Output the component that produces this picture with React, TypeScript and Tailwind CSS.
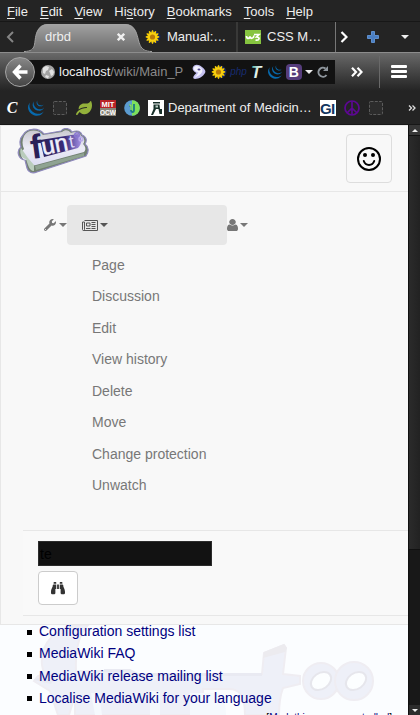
import React from "react";
import { FaBinoculars, FaLeaf, FaWrench } from "react-icons/fa";
import { SiJquery } from "react-icons/si";

const menus = [
  ["", "F", "ile"],
  ["", "E", "dit"],
  ["", "V", "iew"],
  ["Hi", "s", "tory"],
  ["", "B", "ookmarks"],
  ["", "T", "ools"],
  ["", "H", "elp"],
];

const pageActions = ["Page", "Discussion", "Edit", "View history", "Delete", "Move", "Change protection", "Unwatch"];

const wikiLinks = [
  "Configuration settings list",
  "MediaWiki FAQ",
  "MediaWiki release mailing list",
  "Localise MediaWiki for your language",
];

function Caret({ className }: { className: string }) {
  return (
    <svg viewBox="0 0 8 4" className={className} fill="currentColor" aria-hidden="true">
      <path d="M0 0h8L4 4z" />
    </svg>
  );
}

function Sunflower() {
  return (
    <svg viewBox="0 0 16 16" className="h-4 w-4 shrink-0" aria-hidden="true">
      <circle cx="9" cy="8" r="6.500" fill="#14235c" />
      {[0, 30, 60, 90, 120, 150].map((a) => (
        <ellipse key={a} cx="7.500" cy="8" rx="7" ry="1.600" fill="#f5cc00" transform={`rotate(${a} 7.500 8)`} />
      ))}
      <circle cx="7.500" cy="8" r="4.600" fill="#f7cf12" />
      <circle cx="7.500" cy="8" r="2.600" fill="#b87a08" />
    </svg>
  );
}

function W3Icon() {
  return (
    <svg viewBox="0 0 16 14" className="h-3.5 w-4 shrink-0" aria-hidden="true">
      <rect width="16" height="14" fill="#86c440" />
      <path d="M1.500 6c0 3 3 3 3.500 .5C5.500 9 8.500 9 9 5.500M9 4.500h5L11.500 7c4 0 3 4-1 3" fill="none" stroke="#fff" strokeWidth="1.700" />
    </svg>
  );
}

function Dashed() {
  return (
    <svg viewBox="0 0 16 16" className="h-4 w-4 shrink-0" aria-hidden="true">
      <rect x="1.500" y="1.500" width="13" height="13" rx="1" fill="#2c2c2c" stroke="#5c5c5c" strokeDasharray="3 1.300" />
    </svg>
  );
}

function Globe() {
  return (
    <svg viewBox="0 0 14 14" className="h-3.5 w-3.5 shrink-0" aria-hidden="true">
      <circle cx="7" cy="7" r="7" fill="#a3a3a3" />
      <path d="M2 3l3-2 3 1-1 3-2 1-1 3-2-1zM8 6l3-2 2 3-1 3-2 1-1-3zM5 10l3 1-1 2.500-3-1.500z" fill="#e2e2e2" />
    </svg>
  );
}

function Gentoo() {
  return (
    <svg viewBox="0 0 16 16" className="h-4 w-4 shrink-0" aria-hidden="true">
      <path d="M2 3C4-.5 8 .5 11 3c3 2.500 4 4 3 6-1.500 3-6 6-10 6-3-.5-2-3 1.500-6C2 7 1 5 2 3z" fill="#c6c2f2" />
      <path d="M3 3.500C5 1 8 2 10 4c1.500 1.500 2 3 .5 5C9 11 5 13.500 3.500 13.500c2-2 3-3 4-5C5 7.500 2 6 3 3.500z" fill="#f3f2ff" />
      <ellipse cx="8" cy="5.500" rx="1.500" ry="1" fill="#50488c" />
    </svg>
  );
}

function NewsIcon() {
  return (
    <svg viewBox="0 0 16 11" className="h-[11px] w-4" fill="none" stroke="currentColor" aria-hidden="true">
      <path d="M2.500 .5h13v10h-14q-1 0-1-1V2h2v7.500q0 1-1 1" />
      <path d="M4.500 3h3.500v3H4.500zM9.500 2.500h4M9.500 4.500h4M9.500 6.500h4M4 8.500h4.500M9.500 8.500h4" />
    </svg>
  );
}

function UserIcon() {
  return (
    <svg viewBox="0 128 1280 1536" className="h-3 w-[11px]" fill="currentColor" preserveAspectRatio="none" aria-hidden="true">
      <path d="M1280 1399q0 109-62.500 187t-150.500 78h-854q-88 0-150.500-78t-62.500-187q0-85 8.500-160.500t31.500-152 58.500-131 94-89 134.500-34.500q131 128 313 128t313-128q76 0 134.500 34.500t94 89 58.500 131 31.500 152 8.500 160.500zm-256-887q0 159-112.500 271.500t-271.500 112.500-271.500-112.500-112.500-271.500 112.500-271.500 271.500-112.500 271.500 112.500 112.500 271.500z" />
    </svg>
  );
}

function Logo() {
  return (
    <svg viewBox="0 0 72 46" className="h-[46px] w-[72px]" role="img" aria-label="Funtoo">
      <defs>
        <linearGradient id="logoFace" x1="0" y1="0" x2="1" y2="0">
          <stop offset="0" stopColor="#2a2058" />
          <stop offset=".6" stopColor="#3a2c7a" />
          <stop offset="1" stopColor="#a592e6" />
        </linearGradient>
        <linearGradient id="logoRim" x1="0" y1="0" x2="0" y2="1">
          <stop offset="0" stopColor="#c9c9d0" />
          <stop offset=".5" stopColor="#ececf6" />
          <stop offset="1" stopColor="#dcdcf2" />
        </linearGradient>
      </defs>
      <path d="M6 7C10 0 21-1 27 6l17-3c3-4 9-3 11 1 5-2 9-1 10 3 5 2 5 6 3 9 4 3 4 8 1 12L20 44c-5 2-9 0-10-4l-2-8c-7-1-9-9-4-13C2 14 3 10 6 7z" fill="#728172" stroke="#8f89bd" strokeWidth="1.200" />
      <path d="M7 8C11 1 21 1 26 7l19-3c3-3 7-2 9 1 5-2 9-1 10 3 4 2 4 6 2 8 3 3 3 6 1 8L19 37c-4 1-6-1-8-5-7 1-9-7-4-11-2-4-2-9 0-13z" fill="url(#logoRim)" />
      <path d="M4 20l7 10 6 7v6q-4 0-6-6l-2-6c-5-1-7-7-5-11z" fill="#b9ccbc" />
      <path d="M18 38l49-13v3L19 42z" fill="#8fa392" />
      <path d="M23 12l38-6c5 3 4 10 0 14l-34 9z" fill="url(#logoFace)" />
      <text x="15" y="31" transform="rotate(-8 15 31)" fontFamily="Liberation Sans" fontSize="34" fontWeight="700" fill="#2a2058">f</text>
      <text x="26" y="27" transform="rotate(-11 26 27)" fontFamily="Liberation Sans" fontSize="24" fill="#f0f0fb" stroke="#f0f0fb" strokeWidth=".5">un</text>
      <text x="53" y="20" transform="rotate(-10 53 20)" fontFamily="Liberation Sans" fontSize="18" fill="#dedaf8">t</text>
      <circle cx="60" cy="7" r="2.300" fill="none" stroke="#8b78d2" strokeWidth="1.500" />
      <circle cx="64" cy="11" r="2" fill="none" stroke="#b9abea" strokeWidth="1.300" />
    </svg>
  );
}

/* Pale bevelled emblem behind the article */
function Watermark() {
  return (
    <svg viewBox="0 0 407 90" className="absolute left-0 top-0 h-[90px] w-[407px]" aria-hidden="true">
      <g fill="#eef0f8" stroke="#efedf2" strokeWidth="2">
        <path d="M42 40C40 18 56 2 80 0h8c-8 8-13 24-12 46h48l10 3h128l2-21 20-8 2 3-3 26 17 2v8l-17 4c-3 8-4 16-4 27h-34c0-20-6-26-16-26h-26v26H75V70l-6 20H58l-8-24-16-10 4-5 6-2z" />
        <circle cx="321" cy="56" r="18" />
        <circle cx="354" cy="56" r="19" />
      </g>
      <path d="M34 55l12-6 10 2-5 8zM104 47h24l10 4h124v-3H138l-8-4h-26z" fill="#e9eaf2" />
      <path d="M95 90l-4-22h8l3 22zM150 90V66h10v24zM190 90V68h28c6 4 8 12 8 22z" fill="#f5f9fd" />
      <ellipse cx="321" cy="56" rx="11" ry="8" transform="rotate(-35 321 56)" fill="#fcfeff" stroke="#e6e6ec" strokeWidth="2" />
      <ellipse cx="356" cy="56" rx="11" ry="8" transform="rotate(-35 356 56)" fill="#fcfeff" stroke="#e6e6ec" strokeWidth="2" />
      <path d="M263 33l1-6 20-8 3 4-2 4z" fill="#ecebef" />
    </svg>
  );
}

export default function App() {
  return (
    <div className="flex h-screen flex-col overflow-hidden bg-[#242424] font-['Liberation_Sans',Arial,sans-serif] text-[13px] text-[#eeeeee]">
      <div className="flex h-[22px] shrink-0 items-center gap-3 border-b border-[#171717] px-[7px] pt-0.5" role="menubar">
        {menus.map(([a, b, c]) => (
          <button key={b + c} role="menuitem" className="leading-5">
            {a}
            <span className="underline underline-offset-2">{b}</span>
            {c}
          </button>
        ))}
      </div>

      <div className="flex h-[30px] shrink-0 items-center">
        <button className="w-9 shrink-0 pl-1.5" aria-label="Scroll tabs left">
          <svg viewBox="0 0 8 12" className="h-3 w-2" fill="none" stroke="#858585" strokeWidth="2">
            <path d="M7 1L2 6l5 5" />
          </svg>
        </button>
        <div className="relative flex h-full w-[104px] shrink-0 items-center">
          <svg viewBox="0 0 128 28" className="absolute -left-3 bottom-0 h-7 w-32" preserveAspectRatio="none" aria-hidden="true">
            <defs>
              <linearGradient id="tabFill" x1="0" y1="0" x2="0" y2="1">
                <stop offset="0" stopColor="#a2a2a2" />
                <stop offset="1" stopColor="#6a6a6a" />
              </linearGradient>
            </defs>
            <path d="M0 28C14 28 9 18 13 8Q16 0 24 0h77q8 0 11 8c4 10 2 20 16 20z" fill="url(#tabFill)" />
            <path d="M0 27.500C14 27.500 9 18 13 8Q16 .5 24 .5h77q8 0 11 7.500c4 10 2 19.500 16 19.500" fill="none" stroke="#a2a2a2" />
          </svg>
          <button className="relative flex-1 pl-[9px] text-left" role="tab" aria-selected="true">drbd</button>
          <button className="relative mr-[15px]" aria-label="Close tab">
            <svg viewBox="0 0 8 8" className="h-2 w-2" stroke="#f0f0f0" strokeWidth="2.400">
              <path d="M.8 .8l6.400 6.400M7.200 .8L.8 7.200" />
            </svg>
          </button>
        </div>
        <button className="flex h-full w-24 shrink-0 items-center gap-1.5 pl-[5px]" role="tab">
          <Sunflower />
          Manual:…
        </button>
        <button className="flex h-full min-w-0 flex-1 items-center gap-1.5 border-l-2 border-[#393938] pl-[7px]" role="tab">
          <W3Icon />
          CSS M…
        </button>
        <button className="h-full w-6 shrink-0 border-l border-[#777777] pl-1" aria-label="Scroll tabs right">
          <svg viewBox="0 0 8 12" className="h-3 w-2" fill="none" stroke="#fff" strokeWidth="2.200">
            <path d="M1.500 1l5 5-5 5" />
          </svg>
        </button>
        <button className="w-8 shrink-0 pl-2" aria-label="New tab">
          <svg viewBox="0 0 12 12" className="h-3 w-3">
            <path d="M4.500 .5h3v4h4v3h-4v4h-3v-4h-4v-3h4z" fill="#4a7fc4" stroke="#5f8fcc" />
          </svg>
        </button>
        <button className="flex w-[29px] shrink-0 justify-center pr-0.5" aria-label="List all tabs">
          <Caret className="h-1 w-2" />
        </button>
      </div>

      <div className="flex h-[39px] shrink-0 items-center border-t border-[#8c8c8c] bg-linear-to-b from-[#696969] to-[#242424] pl-[5px]">
        <button className="z-10 flex h-[30px] w-[30px] shrink-0 items-center justify-center rounded-full border border-[#a6a6a6] bg-linear-to-b from-[#888888] to-[#454545]" aria-label="Back">
          <svg viewBox="0 0 16 16" className="h-4 w-4" fill="none" stroke="#fff" strokeWidth="3.400">
            <path d="M8.500 1.500L2.500 8l6 6.500M3 8h12.500" />
          </svg>
        </button>
        <div className="-ml-2 flex h-6 min-w-0 flex-1 items-center bg-[#121212] pl-3.5">
          <Globe />
          <div className="ml-1 w-[126px] shrink-0 overflow-hidden whitespace-nowrap text-[#8a8a8a]">
            <span className="text-[#eeeeee]">localhost</span>/wiki/Main_P
          </div>
          <div className="flex flex-1 items-center justify-between pl-1.5 pr-1.5">
            <Gentoo />
            <Sunflower />
            <span className="text-[10px] italic leading-4 text-[#172c70]">php</span>
            <svg viewBox="0 0 14 16" className="h-4 w-3.5 shrink-0" role="img" aria-label="T">
              <defs>
                <linearGradient id="tBadge" x1="0" y1="0" x2="1" y2="1">
                  <stop offset="0" stopColor="#2ba38f" />
                  <stop offset=".5" stopColor="#eef7f0" />
                  <stop offset="1" stopColor="#3f9b80" />
                </linearGradient>
              </defs>
              <text x="0" y="14" fontFamily="Liberation Sans" fontSize="17" fontStyle="italic" fontWeight="700" fill="url(#tBadge)">T</text>
            </svg>
            <SiJquery className="h-3.5 w-3.5 text-[#0769ad]" />
            <span className="flex h-4 w-4 items-center justify-center rounded-sm bg-[#563d7c] text-sm font-bold text-white">B</span>
            <button aria-label="Show history">
              <Caret className="h-1 w-2" />
            </button>
            <button aria-label="Reload">
              <svg viewBox="0 0 12 12" className="h-3 w-3" fill="none" stroke="#8e959c" strokeWidth="2">
                <path d="M9.500 9A4.500 4.500 0 1 1 8.500 2.500" />
                <path d="M11 0v5H6z" fill="#8e959c" stroke="none" />
              </svg>
            </button>
          </div>
        </div>
        <button className="flex w-11 shrink-0 justify-center" aria-label="More tools">
          <svg viewBox="0 0 12 10" className="h-2.5 w-3" fill="none" stroke="#fff" strokeWidth="2.200">
            <path d="M1 .8L5 5 1 9.200M6.500 .8l4 4.200-4 4.200" />
          </svg>
        </button>
        <button className="flex h-8 w-[41px] shrink-0 items-center border-l border-[#696969] pl-[11px]" aria-label="Open menu">
          <svg viewBox="0 0 16 14" className="h-3.5 w-4" fill="#fff">
            <rect width="16" height="3" rx="1" />
            <rect y="5" width="16" height="3" rx="1" />
            <rect y="10" width="16" height="3" rx="1" />
          </svg>
        </button>
      </div>

      <div className="flex h-[34px] shrink-0 items-center gap-2 border-b border-[#171717] px-1">
        <span className="w-4 shrink-0 text-center font-['Liberation_Serif',serif] text-base font-bold italic leading-4 text-white">C</span>
        <SiJquery className="h-4 w-4 shrink-0 text-[#0769ad]" />
        <Dashed />
        <FaLeaf className="h-4 w-4 shrink-0 text-[#93b13b]" />
        <svg viewBox="0 0 16 16" className="h-4 w-4 shrink-0" role="img" aria-label="MIT OCW">
          <rect width="16" height="8" fill="#b92227" />
          <rect y="8" width="16" height="8" fill="#8a8579" />
          <text x="8" y="7" textAnchor="middle" fontSize="7.500" fontWeight="700" fill="#fff">MIT</text>
          <text x="8" y="15" textAnchor="middle" fontSize="6.500" fontWeight="700" fill="#fff">OCW</text>
        </svg>
        <svg viewBox="0 0 16 16" className="h-4 w-4 shrink-0" aria-hidden="true">
          <circle cx="8" cy="8" r="7.800" fill="#5b9bd0" />
          <path d="M8 .2a7.800 7.800 0 0 1 0 15.600z" fill="#7ee05a" />
          <path d="M5 5.500h2v5q0 1.500 1.500 1.500T10 10V4" fill="none" stroke="#1d7a86" strokeWidth="1.800" />
          <path d="M5 5h2v5" fill="none" stroke="#a8f06e" strokeWidth="1.200" />
        </svg>
        <a href="#department" className="flex shrink-0 items-center gap-1">
          <svg viewBox="0 0 16 16" className="h-4 w-4" aria-hidden="true">
            <rect width="16" height="16" fill="#fff" />
            <path d="M5 2h7v1.500H5zM5.500 4.500h6l.5 4.500h2v5h-2.500l-1-5H8l-3 6H3l2.500-6z" fill="#18302a" />
            <path d="M7.500 5.500h2.500v2H7.500z" fill="#b9cec4" />
          </svg>
          Department of Medicin…
        </a>
        <svg viewBox="0 0 16 16" className="h-4 w-4 shrink-0" role="img" aria-label="GI">
          <rect width="16" height="16" fill="#fff" />
          <text x="0" y="14" fontFamily="Liberation Sans" fontSize="15" fontWeight="700" fill="#12365f">G</text>
          <text x="11" y="14" fontFamily="Liberation Sans" fontSize="15" fontWeight="700" fill="#12365f">I</text>
        </svg>
        <svg viewBox="0 0 16 16" className="h-4 w-4 shrink-0" fill="none" stroke="#5c0891" strokeWidth="1.700" aria-hidden="true">
          <circle cx="8" cy="8" r="7" />
          <path d="M8 1v14M8 8l-5 5M8 8l5 5" />
        </svg>
        <Dashed />
        <button className="ml-auto shrink-0" aria-label="More bookmarks">
          <svg viewBox="0 0 8 6" className="h-1.5 w-2" fill="none" stroke="#ddd" strokeWidth="1.300">
            <path d="M1 .5L3.500 3 1 5.500M4.500 .5L7 3 4.500 5.500" />
          </svg>
        </button>
      </div>

      <div className="flex min-h-0 flex-1">
        <div className="min-w-0 flex-1 overflow-hidden bg-[#fbfdff] text-sm">
          <nav className="border border-r-0 border-[#e7e7e7] bg-[#f8f8f8]">
            <div className="flex h-[66px] items-start justify-between border-b border-[#e7e7e7] px-4 pt-0.5">
              <a href="#home">
                <Logo />
              </a>
              <button className="mt-1.5 flex h-[49px] w-[46px] items-center justify-center rounded border border-[#dddddd]" aria-label="Toggle navigation">
                <svg viewBox="0 0 24 24" className="h-6 w-6" fill="none" stroke="#000" strokeWidth="2">
                  <circle cx="12" cy="12" r="11" />
                  <circle cx="8" cy="8" r="2" fill="#000" stroke="none" />
                  <circle cx="16" cy="8" r="2" fill="#000" stroke="none" />
                  <path d="M6.800 14c1.800 5.300 8.600 5.300 10.400 0" strokeLinecap="round" />
                </svg>
              </button>
            </div>

            <div className="flex items-center pl-[43px] pt-[13px] text-[#777777]">
              <button className="flex h-10 w-[23px] items-center justify-between" aria-label="Tools">
                <FaWrench className="h-3 w-3" />
                <Caret className="h-1 w-2" />
              </button>
              <button className="flex h-10 w-40 items-center gap-0.5 rounded bg-[#e7e7e7] pl-[15px] text-[#555555]" aria-label="Page actions">
                <NewsIcon />
                <Caret className="h-1 w-2" />
              </button>
              <button className="flex h-10 items-center gap-0.5" aria-label="User">
                <UserIcon />
                <Caret className="h-1 w-2" />
              </button>
            </div>
            <ul className="mb-[29px] mt-1 grid h-[252px] grid-rows-8 items-center pl-[91px] text-[#777777]">
              {pageActions.map((label) => (
                <li key={label}>
                  <a href="#action">{label}</a>
                </li>
              ))}
            </ul>

            <form className="mb-2 ml-[22px] flex flex-col items-start gap-[5px] border-y border-[#e7e7e7] bg-[#f9f9f9] px-[15px] py-2.5" onSubmit={(e) => e.preventDefault()}>
              <input aria-label="Search" defaultValue="te" className="h-[25px] w-[174px] border border-[#2c2c2c] bg-[#121212] px-px text-black outline-none" />
              <button className="flex h-[34px] w-10 items-center justify-center rounded border border-[#cccccc] bg-white text-[#333333]" aria-label="Go">
                <FaBinoculars className="h-3.5 w-3.5" />
              </button>
            </form>
          </nav>

          <main className="relative">
            <Watermark />
            <ul className="relative grid h-[79px] content-between pl-[27px] leading-3 text-[#000080]">
              {wikiLinks.map((label) => (
                <li key={label} className="flex items-center gap-[7px]">
                  <span className="mt-0.5 h-[5px] w-[5px] bg-black" />
                  <a href="#wiki">{label}</a>
                </li>
              ))}
            </ul>
            <p className="relative mt-2 pr-4 text-right text-[10px] leading-3 text-black">
              [<a href="#patrol" className="text-[#000080]">Mark this page as patrolled</a>]
            </p>
          </main>
        </div>

        <div className="flex w-3 shrink-0 flex-col border-l border-[#111111] bg-[#181818]" aria-hidden="true">
          <div className="flex h-2.5 shrink-0 items-center justify-center bg-[#363636]">
            <Caret className="h-[3px] w-1.5 rotate-180" />
          </div>
          <div className="h-[415px] shrink-0 border-y border-[#111111] bg-linear-to-r from-[#2b2b2b] to-[#222222]" />
          <div className="flex-1" />
          <div className="flex h-2.5 shrink-0 items-center justify-center bg-[#2c2c2c]">
            <Caret className="h-[3px] w-1.5" />
          </div>
        </div>
      </div>
    </div>
  );
}
